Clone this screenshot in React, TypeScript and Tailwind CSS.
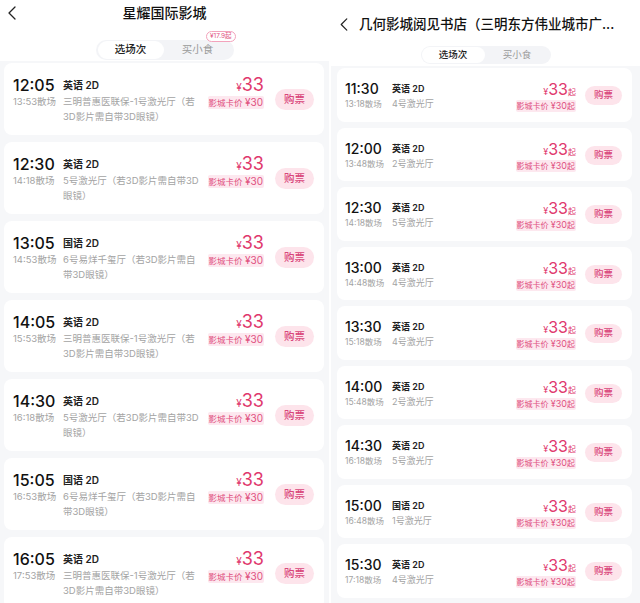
import React from "react";

const FONT = { fontFamily: '"Inter", "Noto Sans CJK SC", "Noto Sans", sans-serif' };

type L = { t: string; e: string; l: string; h: string[] };

const leftData: L[] = [
  { t: "12:05", e: "13:53散场", l: "英语 2D", h: ["三明普惠医联保-1号激光厅（若", "3D影片需自带3D眼镜）"] },
  { t: "12:30", e: "14:18散场", l: "英语 2D", h: ["5号激光厅（若3D影片需自带3D", "眼镜）"] },
  { t: "13:05", e: "14:53散场", l: "国语 2D", h: ["6号易烊千玺厅（若3D影片需自", "带3D眼镜）"] },
  { t: "14:05", e: "15:53散场", l: "英语 2D", h: ["三明普惠医联保-1号激光厅（若", "3D影片需自带3D眼镜）"] },
  { t: "14:30", e: "16:18散场", l: "英语 2D", h: ["5号激光厅（若3D影片需自带3D", "眼镜）"] },
  { t: "15:05", e: "16:53散场", l: "国语 2D", h: ["6号易烊千玺厅（若3D影片需自", "带3D眼镜）"] },
  { t: "16:05", e: "17:53散场", l: "英语 2D", h: ["三明普惠医联保-1号激光厅（若", "3D影片需自带3D眼镜）"] },
];

const rightData = [
  { t: "11:30", e: "13:18散场", l: "英语 2D", h: "4号激光厅" },
  { t: "12:00", e: "13:48散场", l: "英语 2D", h: "2号激光厅" },
  { t: "12:30", e: "14:18散场", l: "英语 2D", h: "5号激光厅" },
  { t: "13:00", e: "14:48散场", l: "英语 2D", h: "4号激光厅" },
  { t: "13:30", e: "15:18散场", l: "英语 2D", h: "4号激光厅" },
  { t: "14:00", e: "15:48散场", l: "英语 2D", h: "2号激光厅" },
  { t: "14:30", e: "16:18散场", l: "英语 2D", h: "5号激光厅" },
  { t: "15:00", e: "16:48散场", l: "国语 2D", h: "1号激光厅" },
  { t: "15:30", e: "17:18散场", l: "英语 2D", h: "4号激光厅" },
];

function Back({ cls }: { cls: string }) {
  return (
    <svg className={cls} viewBox="0 0 8 14" fill="none">
      <polyline points="7,1 1,7 7,13" stroke="#222" strokeWidth="1.3" strokeLinecap="round" strokeLinejoin="round" />
    </svg>
  );
}

function LeftCard({ d }: { d: L }) {
  return (
    <div className="flex h-[72px] shrink-0 rounded-[8px] bg-white pl-[9px] pr-[10px] pt-[13px]">
      <div className="w-[50px]">
        <div className="text-[16px] font-[550] leading-[18px] text-[#111]">{d.t}</div>
        <div className="text-[9.5px] leading-[15px] text-[#a3a3a3]">{d.e}</div>
      </div>
      <div className="flex-1">
        <div className="text-[10px] font-semibold leading-[18px] text-[#222]">{d.l}</div>
        {d.h.map((x, i) => (
          <div key={i} className="whitespace-nowrap text-[9.5px] leading-[15px] text-[#a3a3a3]">{x}</div>
        ))}
      </div>
      <div className="flex flex-col items-end pt-[1px]">
        <div className="flex items-baseline leading-[16px] text-[#e0386d]">
          <span className="text-[10px]">¥</span>
          <span className="text-[18px]">33</span>
        </div>
        <div className="mt-[1px] rounded-[2px] bg-[#fde8ef] px-[1px] text-[8.5px] leading-[12px] text-[#e0507f]">
          影城卡价 <span className="text-[10px]">¥30</span>
        </div>
      </div>
      <div className="ml-[11px] mt-[13px] flex h-[21px] w-[39px] items-center justify-center rounded-full bg-[#fde4eb] text-[10.5px] font-medium text-[#d9467a]">
        购票
      </div>
    </div>
  );
}

function RightCard({ d }: { d: (typeof rightData)[number] }) {
  return (
    <div className="flex h-[53.5px] shrink-0 rounded-[8px] bg-white pl-[8px] pr-[10px] pt-[13px]">
      <div className="w-[47px]">
        <div className="text-[14px] font-[550] leading-[16px] text-[#111]">{d.t}</div>
        <div className="text-[8.5px] leading-[14px] text-[#a3a3a3]">{d.e}</div>
      </div>
      <div className="flex-1">
        <div className="text-[9px] font-semibold leading-[16px] text-[#222]">{d.l}</div>
        <div className="text-[9px] leading-[14px] text-[#a3a3a3]">{d.h}</div>
      </div>
      <div className="flex flex-col items-end">
        <div className="flex items-baseline leading-[16px] text-[#e0386d]">
          <span className="text-[9px]">¥</span>
          <span className="text-[16px]">33</span>
          <span className="text-[8px]">起</span>
        </div>
        <div className="rounded-[2px] bg-[#fde8ef] px-[1px] text-[8px] leading-[11px] text-[#e0507f]">
          影城卡价 <span className="text-[9px]">¥30</span>起
        </div>
      </div>
      <div className="ml-[9px] mt-[5px] flex h-[19px] w-[37px] items-center justify-center rounded-full bg-[#fde4eb] text-[9.5px] font-medium text-[#d9467a]">
        购票
      </div>
    </div>
  );
}

export default function App() {
  return (
    <div style={FONT} className="flex h-[603px] w-[640px] overflow-hidden bg-white">
      {/* Left panel */}
      <div className="flex w-[329px] shrink-0 flex-col bg-[#f6f7f9]">
        <div className="relative h-[61px] shrink-0 bg-white">
          <Back cls="absolute left-[8px] top-[6px] h-[14px] w-[8px]" />
          <div className="pt-[3px] text-center text-[14px] font-medium leading-[20px] text-[#111]">星耀国际影城</div>
          <div className="mt-[17px] flex justify-center">
            <div className="relative flex h-[20px] w-[138px] items-center rounded-full bg-[#f3f4f7] p-[2px]">
              <div className="flex h-[18px] w-[66px] items-center justify-center rounded-full bg-white text-[10.5px] font-medium text-[#222]">
                选场次
              </div>
              <div className="flex-1 text-center text-[10.5px] text-[#9a9a9a]">买小食</div>
              <div className="absolute right-[-2px] top-[-9px] flex h-[11px] items-center rounded-full border border-[#f3a3bc] bg-white px-[3px] text-[6.5px] leading-none text-[#e0507f]">
                ¥17.9起
              </div>
            </div>
          </div>
        </div>
        <div className="flex flex-col gap-[7px] pl-[4px] pr-[5px] pt-[2px]">
          {leftData.map((d, i) => (
            <LeftCard key={i} d={d} />
          ))}
        </div>
      </div>
      <div className="w-[2px] shrink-0 bg-white" />
      {/* Right panel */}
      <div className="flex flex-1 flex-col bg-[#f6f7f9]">
        <div className="relative h-[66px] shrink-0 bg-white">
          <div className="flex items-center pl-[9px] pt-[14px]">
            <Back cls="h-[13px] w-[8px]" />
            <div className="ml-[11px] whitespace-nowrap text-[13.5px] font-medium leading-[20px] text-[#111]">
              几何影城阅见书店（三明东方伟业城市广...
            </div>
          </div>
          <div className="mt-[12px] flex justify-center">
            <div className="flex h-[18px] w-[130px] items-center rounded-full bg-[#f3f4f7] p-[1px]">
              <div className="flex h-[16px] w-[63px] items-center justify-center rounded-full bg-white text-[9.5px] font-medium text-[#222]">
                选场次
              </div>
              <div className="flex-1 text-center text-[9.5px] text-[#9a9a9a]">买小食</div>
            </div>
          </div>
        </div>
        <div className="flex flex-col gap-[6px] pl-[6px] pr-[8px] pt-[2px]">
          {rightData.map((d, i) => (
            <RightCard key={i} d={d} />
          ))}
        </div>
      </div>
    </div>
  );
}
